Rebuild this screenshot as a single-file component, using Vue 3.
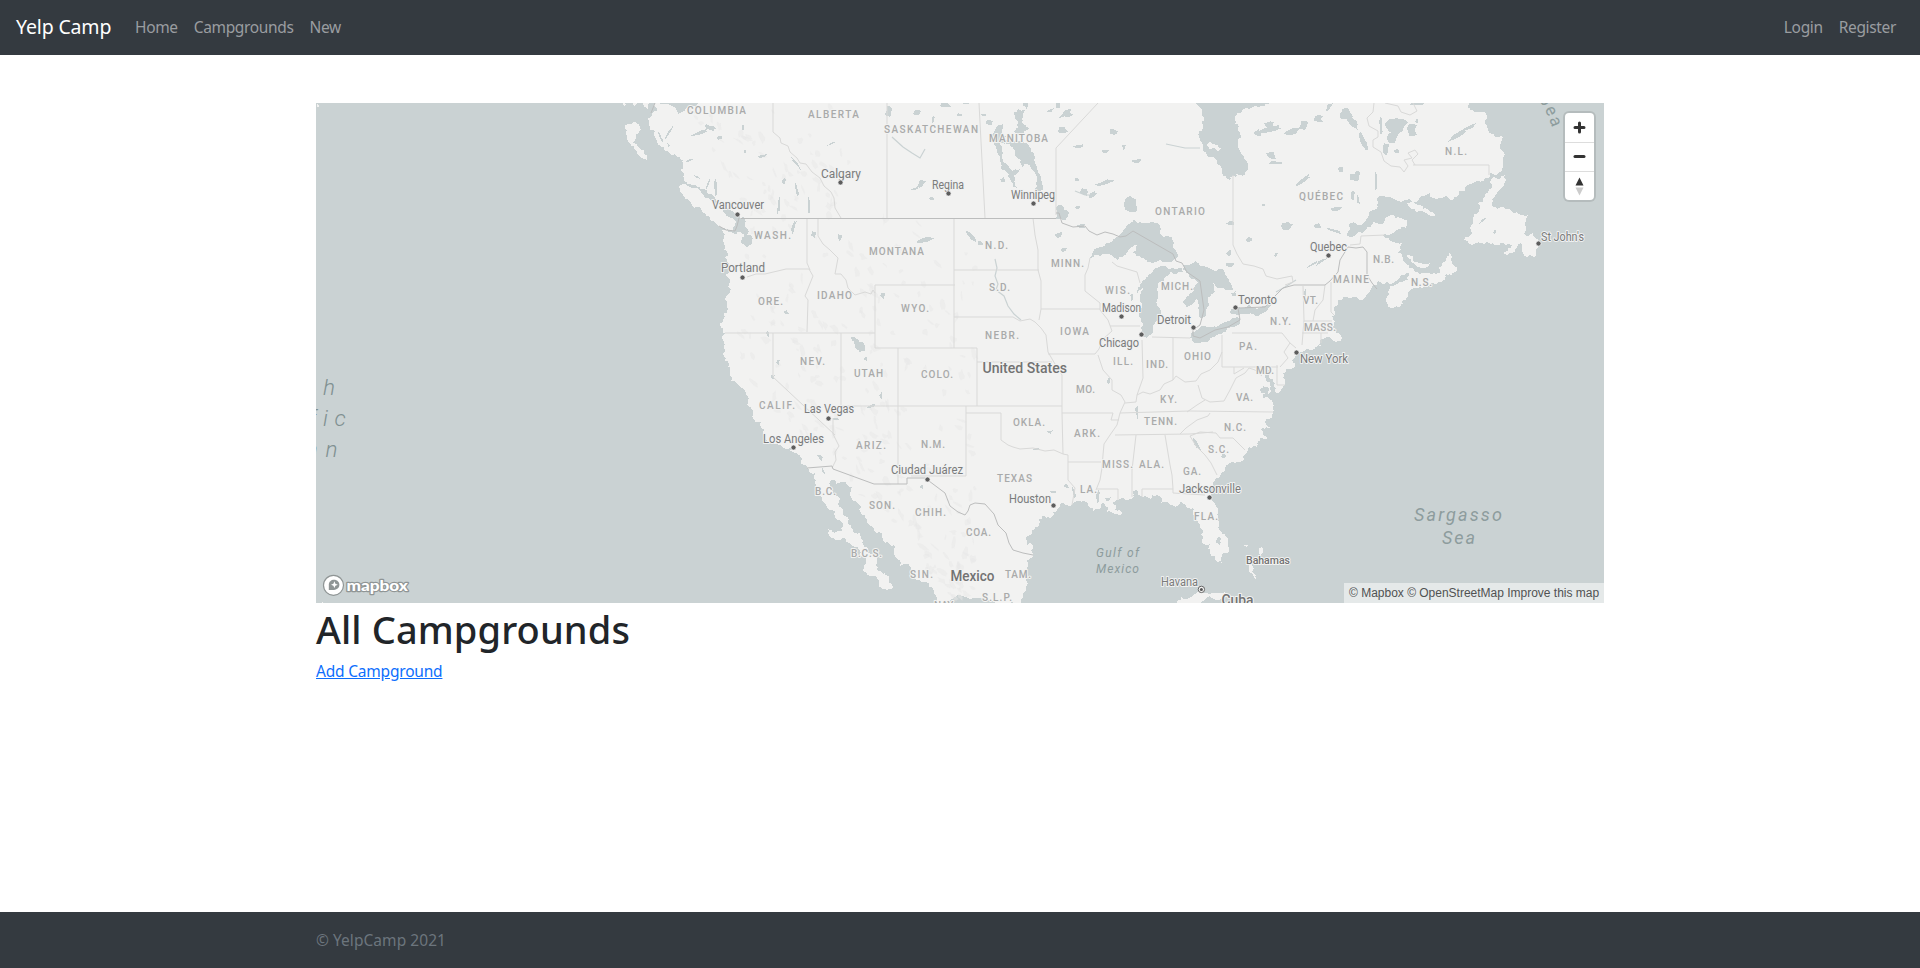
<script setup>
// Deterministic pseudo-random source so the coastline is the same on every load.
function makeRandom(seed) {
  let s = seed
  return () => {
    s = (s * 16807) % 2147483647
    return s / 2147483647
  }
}

function parse(str) {
  return str.trim().split(/\s+/).map((p) => p.split(',').map(Number))
}

// Subdivides a closed outline and nudges the new points for a natural shoreline.
function shore(str, amount = 0.2, seed = 7) {
  const rnd = makeRandom(seed)
  let pts = parse(str)
  for (let pass = 0; pass < 3; pass++) {
    const next = []
    pts.forEach((a, i) => {
      const b = pts[(i + 1) % pts.length]
      const dx = b[0] - a[0]
      const dy = b[1] - a[1]
      next.push(a)
      const len = Math.hypot(dx, dy)
      if (len < 2 || len > 90) return
      const k = (rnd() - 0.5) * 2 * amount
      next.push([(a[0] + b[0]) / 2 - dy * k, (a[1] + b[1]) / 2 + dx * k])
    })
    pts = next
  }
  return 'M' + pts.map((p) => p[0].toFixed(1) + ' ' + p[1].toFixed(1)).join('L') + 'Z'
}

function blob([cx, cy, rx, ry, rot = 0], i) {
  const rnd = makeRandom(101 + i * 37)
  const a = (rot * Math.PI) / 180
  const out = []
  for (let n = 0; n < 9; n++) {
    const t = (n / 9) * Math.PI * 2
    const r = 0.55 + rnd() * 0.75
    const x = Math.cos(t) * rx * r
    const y = Math.sin(t) * ry * r
    out.push((cx + x * Math.cos(a) - y * Math.sin(a)).toFixed(1) + ' ' + (cy + x * Math.sin(a) + y * Math.cos(a)).toFixed(1))
  }
  return 'M' + out.join('L') + 'Z'
}

const line = (str) => 'M' + parse(str).map((p) => p.join(' ')).join('L')

const mainland = shore(`655,103 652,115 655,132 664,143 670,145 670,153 676,156 683,163 683,177 686,182 697,187 706,190
 715,197 723,207 733,212 738,215 745,219 747,228 747,248 741,243 744,236 733,233 722,230 723,240 727,252 729,263 728,287
 727,307 723,320 726,333 725,345 724,357 730,370 740,387 746,393 747,405 753,410 753,418 765,430 773,443 790,447 800,455
 807,468 815,483 822,497 827,507 842,522 842,531 828,529 838,540 850,543 865,558 863,570 877,578 887,590 893,587 890,577
 882,573 877,560 867,547 860,533 848,523 843,510 833,495 832,480 842,482 852,487 857,503 867,520 882,533 883,540 895,547
 895,557 910,567 912,575 923,582 937,598 938,606 1026,606 1026,580 1027,560 1033,554 1028,543 1032,532 1038,520 1050,518
 1058,508 1072,505 1090,508 1102,503 1107,512 1122,513 1113,503 1118,500 1133,498 1137,490 1143,497 1157,495 1170,505
 1183,500 1193,508 1197,520 1202,540 1210,553 1217,562 1223,563 1227,553 1226,537 1218,520 1212,500 1213,483 1223,472
 1237,462 1247,452 1257,447 1260,438 1268,437 1262,428 1270,427 1273,412 1270,400 1260,390 1262,384 1268,394 1266,380
 1271,368 1275,383 1277,393 1285,382 1283,373 1293,368 1297,353 1320,343 1325,338 1342,338 1337,333 1332,327 1335,313
 1338,305 1353,297 1372,287 1387,282 1407,273 1410,272 1400,282 1387,297 1387,303 1393,308 1403,300 1410,290 1427,287
 1440,282 1446,277 1438,273 1423,273 1413,268 1403,260 1398,253 1402,243 1393,242 1383,235 1393,233 1405,228 1407,220
 1393,215 1373,222 1357,233 1337,250 1343,240 1350,223 1373,210 1377,200 1390,197 1420,197 1440,198 1457,197 1473,183
 1490,173 1503,165 1503,137 1490,133 1487,128 1487,117 1470,110 1467,100 1280,100 1262,106 1237,113 1235,120 1240,133
 1245,160 1242,176 1235,172 1230,180 1223,175 1217,163 1203,148 1203,127 1201,108 1196,102 1100,100 1000,100 900,100
 800,100 700,100`, 0.32)

const islands = [
  '679,187 693,188 713,203 730,217 735,225 733,231 720,227 710,218 697,207 683,195',
  '625,125 640,127 633,143 647,163 637,153 627,137',
  '630,101 638,100 637,107 633,105',
  '642,100 650,101 648,109 644,106',
  '622,103 627,104 625,106',
  '654,132 668,145 670,153 662,147',
  '1505,175 1493,177 1485,197 1477,213 1473,223 1464,240 1487,242 1503,243 1513,245 1503,253 1512,253 1521,243 1527,257 1535,257 1538,247 1533,233 1524,234 1528,215 1517,212 1502,207 1493,207 1497,193 1506,180',
  '1407,203 1420,205 1435,216 1417,212',
  '1440,273 1443,263 1450,253 1452,263 1457,267 1448,275',
  '1407,255 1415,262 1430,263 1425,268 1412,263',
  '1298,350 1308,346 1322,345 1312,350 1299,353',
  '1178,606 1182,597 1197,592 1223,593 1232,598 1240,606',
  '1250,564 1252,572 1256,580 1253,576 1249,570',
  '1259,550 1262,547 1261,555',
  '1244,546 1248,545 1246,547',
  '1206,145 1212,143 1221,148 1219,152 1209,149',
  '321,604 323,602 325,604',
  '316,105 319,105 319,107 317,107',
].map((s, i) => shore(s, 0.25, 11 + i))

const lakes = [
  '1090,258 1102,247 1120,235 1126,226 1133,220 1143,223 1157,223 1160,234 1163,237 1172,237 1173,247 1178,257 1168,262 1150,262 1142,258 1133,253 1137,245 1127,252 1117,260 1112,255 1100,256',
  '1153,271 1173,268 1181,268 1183,272 1170,272 1160,282 1157,300 1157,320 1153,333 1147,338 1141,332 1139,315 1140,300 1142,287 1137,294 1140,284 1147,277',
  '1183,265 1207,267 1220,269 1226,276 1232,285 1237,293 1228,290 1213,282 1215,292 1208,297 1206,310 1205,317 1200,318 1199,306 1197,299 1187,308 1183,303 1193,292 1198,282 1187,273',
  '1190,337 1197,330 1210,327 1226,322 1240,318 1240,322 1227,328 1214,337 1203,342 1193,342',
  '1230,313 1238,307 1260,308 1271,304 1267,311 1245,314',
  '1002,142 1013,142 1027,143 1031,152 1035,163 1041,177 1043,190 1035,190 1037,177 1031,168 1025,163 1022,168 1015,155 1012,147',
  '995,130 1003,124 1002,133 1006,142 1000,143 1002,150 1003,162 1012,171 1020,169 1014,175 1018,188 1013,187 1009,174 1001,169 998,155 994,144 990,136',
  '1013,113 1025,110 1022,119 1029,129 1022,138 1014,132 1018,122',
  '1125,201 1130,196 1136,199 1137,211 1130,212 1125,208',
  '1056,208 1062,205 1069,212 1066,220 1056,219',
  '851,337 857,339 862,342 865,350 860,352 855,346',
].map((s, i) => shore(s, 0.2, 43 + i))

const ponds = [
  [889, 112, 4, 6], [917, 113, 5, 3], [933, 120, 2, 4], [946, 105, 6, 3], [960, 115, 3, 2], [966, 103, 4, 2],
  [984, 115, 3, 2], [990, 123, 4, 3], [1026, 105, 3, 3], [1050, 111, 5, 1.5, -20], [1066, 114, 7, 3.5, -20],
  [1063, 130, 6, 2.5], [1058, 105, 3, 3], [1079, 146, 7, 1.6, -10], [1106, 151, 4, 1.6], [1114, 132, 5, 2.5, 15],
  [1124, 147, 2, 2.5], [1138, 161, 5, 1.8], [1106, 182, 10, 2, -18], [1077, 180, 3, 1.5], [1084, 192, 6, 3, 30],
  [1093, 194, 5, 3, -30], [1078, 207, 3, 2], [1059, 235, 5, 2.6, -25], [1064, 250, 3, 2], [1081, 226, 4, 2],
  [1003, 180, 3, 3], [932, 199, 3, 2], [922, 183, 5, 3, -50], [915, 189, 6, 1.2, -10], [840, 238, 2.5, 4],
  [814, 234, 3, 3], [883, 295, 3, 3], [786, 312, 3, 2], [768, 334, 2, 3], [866, 359, 1.8, 2], [872, 406, 5, 1.5, -20],
  [881, 396, 2, 3], [773, 377, 2, 2.5], [778, 362, 2, 3], [820, 457, 4, 2, 40], [823, 471, 1.5, 4, -20],
  [922, 487, 2, 2], [836, 419, 4, 1.4], [700, 133, 12, 2, -20], [711, 128, 6, 2.5, 30], [720, 138, 3, 1.5],
  [763, 156, 6, 1.4, -15], [796, 163, 9, 1.4, 48], [832, 143, 5, 1, -25], [779, 205, 1.5, 9, 5], [784, 181, 4, 2, -60],
  [797, 190, 1.4, 8, -15], [809, 207, 1.4, 9, -5], [716, 190, 1.5, 9, -5], [794, 226, 1.5, 7, 15], [926, 239, 9, 2.5, -18],
  [972, 237, 8, 2, 40], [980, 243, 4, 2], [1231, 223, 5, 2], [1229, 253, 3, 3], [1230, 265, 6, 1.8],
  [1249, 240, 3, 2.4], [1258, 133, 4, 3], [1234, 294, 3, 2.5], [1235, 173, 2, 4], [1272, 129, 12, 3, -15],
  [1270, 125, 5, 4], [1291, 132, 11, 3.5, -8], [1304, 126, 5, 5], [1318, 119, 5, 3.5], [1329, 107, 6, 2, -60],
  [1271, 155, 6, 5], [1277, 163, 8, 2], [1304, 180, 10, 2.6, -38], [1341, 170, 3, 4], [1356, 177, 5, 7],
  [1353, 197, 2, 6], [1346, 113, 8, 5], [1353, 122, 10, 3, 45], [1362, 138, 3, 11, -25], [1376, 180, 1.4, 9],
  [1386, 148, 4, 6], [1398, 125, 11, 9, 20], [1393, 138, 6, 5], [1412, 130, 5, 6], [1381, 125, 1.8, 9],
  [1397, 151, 3, 2], [1417, 121, 2, 2], [1417, 104, 10, 1.5], [1459, 134, 12, 2.8, -30], [1470, 127, 8, 2, -20],
  [1287, 227, 7, 4], [1288, 225, 4, 3], [1318, 226, 4, 2.8], [1335, 231, 9, 1.5, 18], [1250, 240, 3, 2],
  [1264, 205, 2, 2], [1276, 255, 2, 2.5], [1336, 209, 7, 3], [1358, 200, 2, 5], [1322, 261, 7, 1.5, -35],
  [1313, 264, 8, 1, -30], [1305, 295, 1.2, 8], [1219, 541, 2.5, 3.5], [1197, 445, 2, 7, -30], [1137, 412, 1.4, 8, -5],
  [1050, 432, 3, 2], [1037, 449, 4, 1.5], [1066, 486, 3, 2], [1053, 492, 5, 1.5], [1224, 456, 2.5, 2],
  [1109, 381, 1.8, 3], [1098, 497, 2, 6], [1108, 499, 3, 2], [1074, 492, 1.3, 6, -12], [1028, 540, 1.6, 5],
  [1132, 297, 1.5, 4], [1483, 220, 5, 1, -40], [1495, 232, 2, 2], [1265, 396, 3, 2],
  [668, 134, 1.4, 8, 30], [661, 138, 1.2, 6, -30], [690, 160, 5, 1.2, -30], [697, 177, 4, 1, 20], [743, 127, 1.2, 3],
  [745, 151, 1.2, 2], [708, 184, 1.2, 5, 20],
].map(blob)

// Soft relief patches over the western ranges.
const reliefRandom = makeRandom(977)
const relief = Array.from({ length: 300 }, () => {
  const cy = 108 + reliefRandom() * 490
  const west = cy < 200 ? 690 + (cy - 108) * 0.5 : cy < 380 ? 740 : 745 + (cy - 380) * 0.95
  const east = cy < 220 ? 850 : 975
  return [
    west + reliefRandom() * (east - west),
    cy,
    2 + reliefRandom() * 5,
    0.8 + reliefRandom() * 2.2,
    20 + reliefRandom() * 80,
  ]
}).map(blob)

const stateLines = [
  '773,103 773,132 780,138 781,143 788,146 790,152 797,158 800,163 806,164 812,172 820,178 824,186 831,192 834,198 835,208 841,218',
  '887,103 887,218', '979,103 985,218', '1098,103 1056,148 1056,215',
  '1233,175 1233,245 1237,254 1243,264 1254,266 1263,269 1266,276 1277,279 1292,276 1293,282 1285,285',
  '807,218 807,263 810,270', '747,277 756,274 765,274 786,269 809,269 813,276 809,286 805,296 808,300 807,332',
  '818,218 818,236 823,244 830,250 838,258 835,274 841,274 846,280 848,288 855,295 865,292 871,294 873,290 875,293',
  '875,285 955,285', '875,285 875,348 977,348 977,406', '725,333 875,333', '954,218 954,348', '898,348 898,484',
  '773,333 773,377 835,435', '841,333 841,406', '833,418 833,434 839,446 835,452 836,460 832,468', '841,406 1062,406',
  '966,406 966,476 911,476', '966,413 1001,413 1001,440 1008,445 1013,447 1020,449 1033,448 1045,451 1054,450 1063,454 1068,455 1068,480 1075,488 1072,505',
  '954,270 1039,270', '954,317 1013,317 1020,321 1030,319 1035,322 1041,328 1046,335 1048,352 1055,364 1062,375',
  '1033,218 1035,235 1038,250 1038,270 1041,281 1041,309 1039,320', '1041,309 1100,309',
  '1048,354 1095,354 1099,349 1102,340 1112,331 1108,320 1100,310 1100,303 1085,291 1085,275 1088,268 1090,258',
  '977,362 1052,362', '1062,375 1062,413 1063,454', '1062,413 1113,413 1111,420 1119,420',
  '1098,355 1103,370 1112,380 1112,390 1121,395 1125,402 1120,413 1117,425 1110,435 1104,444 1103,455 1102,468 1100,480 1096,490',
  '1125,403 1136,402 1137,395 1143,392 1150,394 1160,390 1164,384 1173,380 1176,376 1185,382 1196,381 1201,374 1210,370 1218,362 1222,352',
  '1142,340 1143,378 1137,395', '1173,338 1173,380', '1152,337 1190,338', '1222,335 1222,367 1278,367', '1110,326 1140,326',
  '1112,262 1117,266 1137,272 1140,283', '1120,413 1190,411 1273,412', '1115,435 1190,434 1213,432',
  '1136,435 1132,470 1132,497', '1165,435 1170,465 1172,475 1173,489', '1142,497 1142,489 1173,489 1173,493 1205,495',
  '1068,462 1101,462', '1097,489 1118,489 1118,500', '1190,436 1196,446 1205,455 1211,463 1217,475',
  '1190,436 1200,432 1216,433 1220,438 1233,438 1245,450', '1180,434 1186,428 1197,420 1208,416 1210,413',
  '1198,385 1202,398 1210,402 1224,401 1230,390 1236,378 1245,373 1249,368 1255,370 1262,376',
  '1187,412 1197,405 1205,400', '1234,367 1234,374 1244,368', '1277,365 1277,385 1285,385', '1232,333 1282,333 1290,343 1296,348',
  '1290,343 1284,352 1288,358 1280,367', '1303,286 1304,320 1302,345', '1325,285 1323,300 1315,310 1313,321',
  '1331,282 1331,312 1334,315', '1304,321 1332,321', '1302,333 1328,333', '1321,333 1321,343', '1350,245 1360,244 1361,236 1385,235',
  '1413,165 1489,165 1489,175',
  '1374,103 1373,112 1367,118 1369,126 1378,131 1378,137 1373,140 1373,147 1381,152 1384,161 1391,166 1400,167 1404,172 1408,166 1404,160 1412,158 1408,153 1415,150 1418,154 1412,160 1415,165',
  '1413,103 1417,111 1410,115 1401,112 1398,106 1385,103',
].map(line)

const nationLines = [
  '741,218.5 1056,218.5',
  '1056,213 1059,213 1062,223 1073,227 1085,226 1089,231 1097,235 1105,232 1113,234 1120,237 1126,236 1133,231 1173,254 1176,261 1182,263 1187,272 1200,281 1204,310 1200,325 1193,330 1193,336 1200,338 1215,330 1228,327 1240,320 1238,308 1265,307 1275,296 1283,288 1294,285 1325,285 1330,281 1338,272 1340,260 1348,247 1356,248 1363,247 1367,252 1367,275 1372,283 1377,289',
  '807,468 832,466 833,469 874,484 907,484 907,478 925,478 945,493 950,506 958,512 965,515 968,511 970,505 975,503 985,504 994,514 998,525 1006,533 1009,543 1013,550 1023,553 1033,555',
  '655,103 651,113', '719,226 726,230 735,231 737,226 739,218',
].map(line)

const rivers = [
  '995,259 997,268 995,276 998,284 996,290 1004,296 1008,306 1014,314 1021,320', '892,137 903,147 912,153 920,158 925,149',
  '1296,280 1285,287 1276,292', '1166,144 1185,148 1200,148', '1075,191 1085,195 1094,195',
].map(line)

// text, left, right, baseline
const states = [
  ['COLUMBIA', 687, 746, 114], ['ALBERTA', 808, 859, 118], ['SASKATCHEWAN', 884, 978, 133], ['MANITOBA', 989, 1048, 141.5],
  ['WASH.', 754, 791, 239], ['MONTANA', 869, 924, 255], ['ORE.', 758, 783, 304.5], ['IDAHO', 817, 852, 299], ['WYO.', 901, 929, 312],
  ['NEV.', 800, 825, 365], ['ONTARIO', 1155, 1205, 214.5], ['N.D.', 985, 1008, 249], ['MINN.', 1051, 1084, 267], ['S.D.', 989, 1010, 291],
  ['WIS.', 1105, 1130, 294], ['MICH.', 1161, 1193, 290], ['NEBR.', 985, 1019, 338.5], ['IOWA', 1060, 1089, 335], ['PA.', 1239, 1257, 350],
  ['OHIO', 1184, 1211, 360], ['N.L.', 1445, 1467, 155], ['QUÉBEC', 1299, 1343, 200], ['N.B.', 1373, 1394, 262.5], ['MAINE', 1333, 1369, 283],
  ['N.S.', 1411, 1432, 286], ['VT.', 1303, 1318, 304], ['N.Y.', 1270, 1291, 325], ['MASS.', 1304, 1336, 331], ['CALIF.', 759, 795, 409],
  ['UTAH', 854, 883, 377], ['COLO.', 921, 953, 378], ['ARIZ.', 856, 886, 449], ['N.M.', 921, 945, 447.5], ['TEXAS', 997, 1032, 482],
  ['B.C.', 815, 836, 495], ['SON.', 869, 895, 509], ['CHIH.', 915, 946, 515.5], ['COA.', 966, 991, 536], ['B.C.S.', 851, 882, 557],
  ['SIN.', 910, 933, 578], ['TAM.', 1005, 1031, 578], ['S.L.P.', 982, 1012, 601], ['NAY.', 934, 955, 609], ['ILL.', 1113, 1133, 364.5],
  ['IND.', 1146, 1168, 367.5], ['MO.', 1076, 1095, 393], ['KY.', 1160, 1177, 403], ['VA.', 1236, 1253, 400.5], ['MD.', 1256, 1274, 374],
  ['OKLA.', 1013, 1045, 425.5], ['ARK.', 1074, 1100, 437], ['TENN.', 1144, 1177, 424.5], ['N.C.', 1224, 1246, 430.5], ['S.C.', 1208, 1229, 453],
  ['MISS.', 1102, 1133, 468], ['ALA.', 1139, 1164, 468], ['GA.', 1183, 1201, 474.5], ['LA.', 1080, 1097, 493], ['FLA.', 1194, 1218, 519.5],
]

// text, left, right, baseline, dot x, dot y
const cities = [
  ['Calgary', 821, 861, 177.5, 840.5, 182.5], ['Vancouver', 712, 764, 209, 737.5, 214.5], ['Portland', 721, 765, 272, 742.5, 277.5],
  ['Regina', 932, 964, 188.5, 948.5, 193.5], ['Winnipeg', 1011, 1055, 199, 1033.5, 203.5], ['Madison', 1102, 1141, 311.5, 1121.5, 316.5],
  ['Detroit', 1157, 1191, 324, 1193.5, 327.5], ['Chicago', 1099, 1139, 346.5, 1141.5, 334.5], ['Toronto', 1238, 1277, 304, 1235.5, 307.5],
  ['Quebec', 1310, 1347, 250.5, 1328.5, 255.5], ["St John's", 1541, 1584, 241, 1538.5, 243.5], ['New York', 1300, 1348, 363, 1296.5, 352.5],
  ['Las Vegas', 804, 854, 413, 828.5, 418.5], ['Los Angeles', 763, 824, 442.5, 793.5, 447.5], ['Ciudad Juárez', 891, 963, 473.5, 927.5, 479.5],
  ['Houston', 1009, 1051, 502.5, 1053.5, 505.5], ['Jacksonville', 1179, 1241, 492.5, 1209.5, 497.5],
]
</script>

<template>
  <div class="page">
    <nav class="navbar">
      <a class="brand">Yelp Camp</a>
      <div class="links">
        <a>Home</a>
        <a>Campgrounds</a>
        <a>New</a>
      </div>
      <div class="links account">
        <a>Login</a>
        <a>Register</a>
      </div>
    </nav>

    <main class="container">
      <section class="map">
        <svg class="canvas" viewBox="316 103 1288 500" width="1288" height="500">
          <rect x="316" y="103" width="1288" height="500" class="water" />
          <path :d="mainland" class="land" />
          <path v-for="(d, i) in islands" :key="'i' + i" :d="d" class="land" />
          <path v-for="(d, i) in relief" :key="'r' + i" :d="d" class="relief" />
          <path v-for="(d, i) in lakes" :key="'l' + i" :d="d" class="water" />
          <path v-for="(d, i) in ponds" :key="'p' + i" :d="d" class="water" />
          <path v-for="(d, i) in rivers" :key="'v' + i" :d="d" class="river" />
          <path v-for="(d, i) in stateLines" :key="'s' + i" :d="d" class="state-line" />
          <path v-for="(d, i) in nationLines" :key="'n' + i" :d="d" class="nation-line" />

          <text
            v-for="s in states" :key="s[0]" class="state" :x="s[1]" :y="s[3]" :textLength="s[2] - s[1]"
          >{{ s[0] }}</text>

          <g v-for="c in cities" :key="c[0]">
            <text class="city" :x="c[1]" :y="c[3]" :textLength="c[2] - c[1]" lengthAdjust="spacingAndGlyphs">{{ c[0] }}</text>
            <circle :cx="c[4]" :cy="c[5]" r="2.6" class="dot" />
          </g>

          <circle cx="1201.4" cy="589.4" r="3.2" class="capital" />
          <circle cx="1201.4" cy="589.4" r="1.5" class="capital-core" />
          <text class="city" x="1161" y="586" textLength="37" lengthAdjust="spacingAndGlyphs">Havana</text>
          <text class="country small" x="1246" y="564" textLength="44" lengthAdjust="spacingAndGlyphs">Bahamas</text>
          <text class="country" x="982.500" y="373" textLength="84.500" lengthAdjust="spacingAndGlyphs">United States</text>
          <text class="country" x="950.500" y="581" textLength="44" lengthAdjust="spacingAndGlyphs">Mexico</text>
          <text class="country" x="1221.500" y="605" textLength="32" lengthAdjust="spacingAndGlyphs">Cuba</text>

          <g class="sea">
            <text class="gulf" x="1096" y="557" textLength="43">Gulf of</text>
            <text class="gulf" x="1096" y="572.5" textLength="43">Mexico</text>
            <text class="sargasso" x="1414" y="520.7" textLength="88">Sargasso</text>
            <text class="sargasso" x="1442" y="544" textLength="33">Sea</text>
            <text class="pacific" x="308 323" y="395">th</text>
            <text class="pacific" x="309 323 334.500" y="426">fic</text>
            <text class="pacific" x="306 325.500" y="457">an</text>
            <text class="labrador" transform="translate(1538.500 99) rotate(58)">b</text>
            <text class="labrador" transform="translate(1544.500 109) rotate(64)">e</text>
            <text class="labrador" transform="translate(1549 119) rotate(69)">a</text>
          </g>

          <g class="logo">
            <circle cx="333.500" cy="585.300" r="10" />
            <path d="M328.800 590V584.800C328.800 581.700 331.200 579.700 334.100 579.700C337 579.700 339.400 581.900 339.400 584.700C339.400 588.400 336 590 332.500 590Z" />
            <path class="spark" d="M334.400 581.300L335.400 583.700L337.800 584.700L335.400 585.700L334.400 588.100L333.400 585.700L331 584.700L333.400 583.700Z" />
            <text x="346.500" y="590.500" textLength="61.500" lengthAdjust="spacingAndGlyphs">mapbox</text>
          </g>
        </svg>

        <div class="controls">
          <button aria-label="Zoom in">
            <svg viewBox="0 0 29 29"><path d="M14.500 10V19M10 14.500H19" /></svg>
          </button>
          <button aria-label="Zoom out">
            <svg viewBox="0 0 29 29"><path d="M10 13.500H19" /></svg>
          </button>
          <button aria-label="Reset bearing to north">
            <svg viewBox="0 0 29 29">
              <polygon points="10.500,13.500 14.500,5.500 18.500,13.500" fill="#333" />
              <polygon points="10.500,15.500 14.500,23.500 18.500,15.500" fill="#ccc" />
            </svg>
          </button>
        </div>
        <div class="attribution"><a>© Mapbox</a> <a>© OpenStreetMap</a> <a>Improve this map</a></div>
      </section>

      <h1>All Campgrounds</h1>
      <a class="add">Add Campground</a>
    </main>

    <footer class="footer">
      <div class="container"><span>© YelpCamp 2021</span></div>
    </footer>
  </div>
</template>

<style>
body {
  margin: 0;
  background: #fff;
}
</style>

<style scoped>
.page {
  display: flex;
  flex-direction: column;
  height: 968px;
  overflow: hidden;
  font-family: "Segoe UI", "Noto Sans", sans-serif;
  font-size: 16px;
  line-height: 24px;
  color: #212529;
}
.navbar {
  display: flex;
  align-items: center;
  box-sizing: border-box;
  height: 55px;
  padding: 0 24px 1px 16px;
  background: #343a40;
}
.brand {
  width: 95px;
  margin-right: 24px;
  font-size: 19.5px;
  letter-spacing: -0.15px;
  white-space: nowrap;
  color: #fff;
}
.links {
  display: flex;
  gap: 16px;
  font-size: 15.5px;
  letter-spacing: -0.35px;
  color: #9a9da0;
}
.account {
  margin-left: auto;
}
.container {
  width: 1288px;
  margin: 0 auto;
}
main.container {
  flex: 1;
  padding-top: 48px;
}
.map {
  position: relative;
  height: 500px;
  overflow: hidden;
  background: #cad2d3;
}
.canvas {
  display: block;
}
.water {
  fill: #cad2d3;
  shape-rendering: crispEdges;
}
.land {
  fill: #f2f2f1;
  shape-rendering: crispEdges;
}
.relief {
  fill: #e8e8e7;
  opacity: 0.5;
}
.river {
  fill: none;
  stroke: #cad2d3;
  stroke-width: 1.2;
}
.state-line {
  fill: none;
  stroke: #d9d9d8;
  stroke-width: 1;
}
.nation-line {
  fill: none;
  stroke: #bcbdbd;
  stroke-width: 1;
}
.canvas text {
  font-family: Roboto, sans-serif;
  stroke-linejoin: round;
  paint-order: stroke;
}
.canvas .state {
  font-size: 10px;
  font-weight: 500;
  fill: #a9aaaa;
  stroke: #f2f2f1;
  stroke-width: 2;
}
.canvas .city {
  font-size: 12px;
  fill: #7a7b7b;
  stroke: #f0f1f1;
  stroke-width: 2;
}
.canvas .country {
  font-size: 14px;
  font-weight: 500;
  fill: #727373;
  stroke: #f2f2f1;
  stroke-width: 2;
}
.canvas .country.small {
  font-size: 11px;
}
.dot {
  fill: #5d5d5d;
  stroke: #f4f4f4;
  stroke-width: 0.8;
}
.capital {
  fill: #f2f2f1;
  stroke: #666;
  stroke-width: 1;
}
.capital-core {
  fill: #555;
}
.sea text {
  fill: #8d9c9d;
  font-style: italic;
}
.sea .gulf {
  font-size: 12px;
}
.sea .sargasso {
  font-size: 18px;
}
.sea .pacific {
  font-size: 22.5px;
  font-weight: 300;
  fill: #7f9091;
}
.sea .labrador {
  font-size: 17px;
  font-style: normal;
}
.logo circle {
  fill: #fff;
  stroke: #8f9595;
  stroke-width: 1.2;
}
.logo path {
  fill: #8f9595;
}
.logo .spark {
  fill: #fff;
}
.logo text {
  font-family: Lato, sans-serif;
  font-size: 15.5px;
  font-weight: 900;
  fill: #fff;
  stroke: #8f9595;
  stroke-width: 2.4;
}
.controls {
  position: absolute;
  top: 10px;
  right: 10px;
  width: 29px;
  border-radius: 4px;
  background: #fff;
  box-shadow: 0 0 0 2px rgba(0, 0, 0, 0.1);
}
.controls button {
  display: block;
  box-sizing: border-box;
  width: 29px;
  height: 29px;
  padding: 0;
  border: 0;
  background: transparent;
}
.controls button + button {
  border-top: 1px solid #ddd;
}
.controls svg {
  display: block;
  width: 29px;
  height: 29px;
}
.controls path {
  fill: none;
  stroke: #333;
  stroke-width: 3;
  stroke-linecap: round;
}
.attribution {
  position: absolute;
  right: 0;
  bottom: 0;
  box-sizing: border-box;
  width: 260px;
  height: 20px;
  padding: 0 5px;
  background: rgba(255, 255, 255, 0.5);
  font: 12px/20px "Liberation Sans", Arial, sans-serif;
  letter-spacing: -0.01px;
  text-align: right;
  white-space: nowrap;
  color: #505252;
}
h1 {
  margin: 0 0 6px;
  padding-top: 2px;
  font-size: 38px;
  font-weight: 500;
  line-height: 48px;
  letter-spacing: 0.1px;
}
.add {
  color: #0d6efd;
  text-decoration: underline;
  font-size: 15.5px;
  letter-spacing: -0.2px;
}
.footer {
  height: 56px;
  background: #343a40;
  color: #6c757d;
}
.footer .container {
  padding-top: 16px;
  font-size: 15.5px;
  letter-spacing: 0.05px;
}
</style>
